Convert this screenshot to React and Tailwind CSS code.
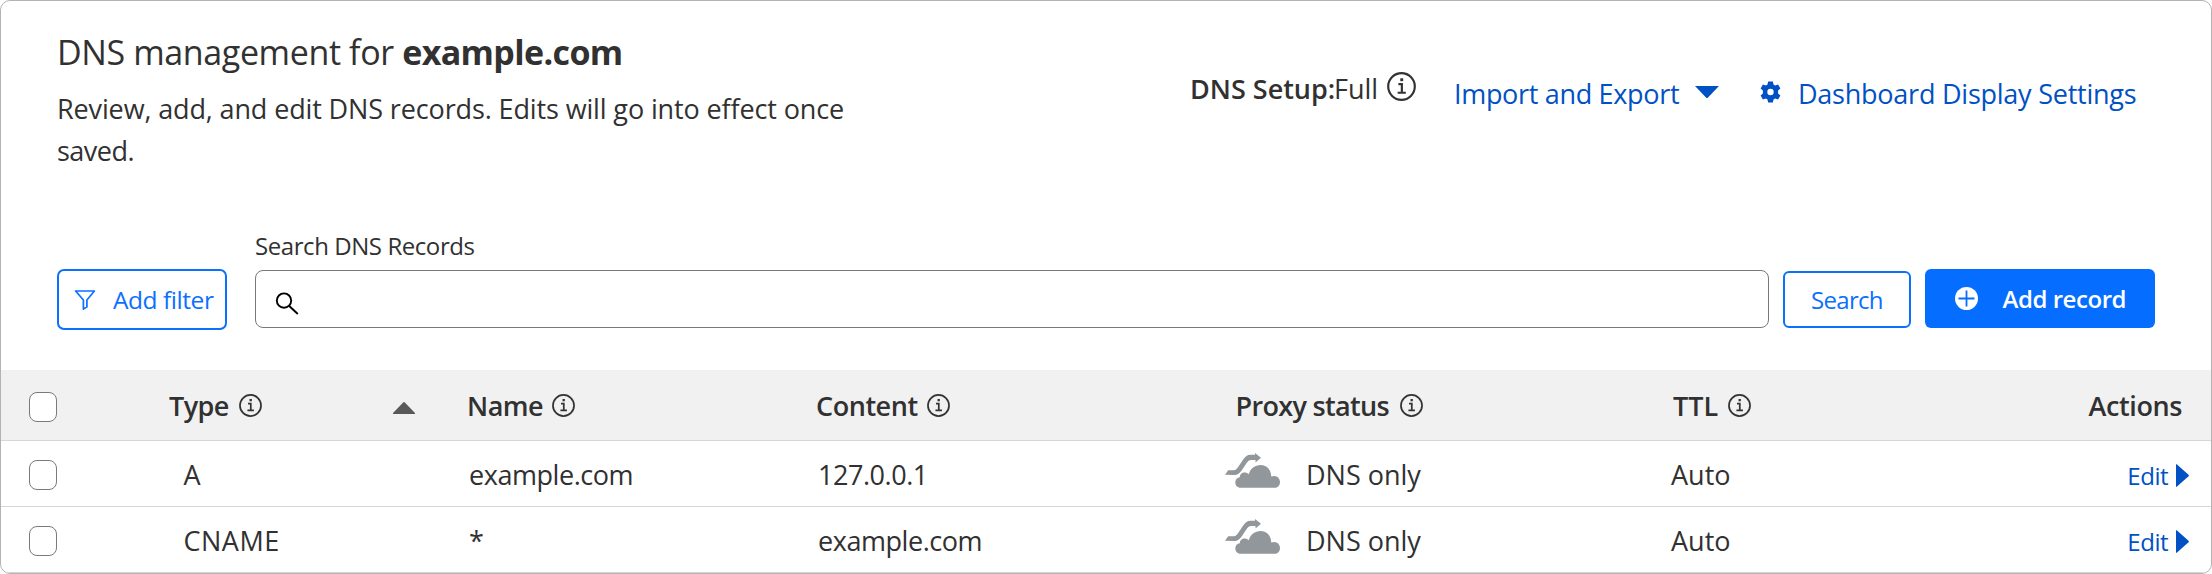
function InfoIcon({ className }) {
  return (
    <svg viewBox="0 0 24 24" className={className} fill="none" stroke="#333" strokeWidth="1.8">
      <circle cx="12" cy="12" r="11" />
      <path d="M9.4 10h2.9v7.2M8.8 17.2h6.8" />
      <rect x="11" y="5.2" width="2.4" height="2.4" fill="#333" stroke="none" />
    </svg>
  );
}

function FilterIcon() {
  return (
    <svg viewBox="0 0 22 20" className="h-5 w-[22px] shrink-0" fill="none" stroke="#0a70ff" strokeWidth="1.7">
      <path d="M1.6 1h18.8l-7.5 9v6.9l-3.5 2.2V10z" strokeLinejoin="round" />
    </svg>
  );
}

function SearchIcon() {
  return (
    <svg viewBox="0 0 24 23" className="mt-[4px] h-[23px] w-6" fill="none" stroke="#000" strokeWidth="1.9">
      <circle cx="9" cy="8.6" r="7.2" />
      <path d="M14 13.8l8.8 8.2" />
    </svg>
  );
}

function GearIcon() {
  return (
    <svg viewBox="0 0 20 22" className="h-[22px] w-[21px] shrink-0" fill="#0051c3">
      <path
        fillRule="evenodd"
        d="M7.6.6h4.8l.6 3 1.6.9 3-1.1 2.3 4.1-2.3 2.1v2.8l2.3 2.1-2.3 4.1-3-1.1-1.6.9-.6 3H7.6l-.6-3-1.6-.9-3 1.1L.1 14.5l2.3-2.1V9.6L.1 7.5l2.3-4.1 3 1.1 1.6-.9zM10 7.8a3.2 3.2 0 1 0 0 6.4a3.2 3.2 0 1 0 0-6.4z"
      />
    </svg>
  );
}

function PlusIcon() {
  return (
    <svg viewBox="0 0 23 23" className="h-[23px] w-[23px] shrink-0">
      <circle cx="11.5" cy="11.5" r="11.5" fill="#fff" />
      <path d="M11.5 3.500v16M3.500 11.500h16" stroke="#056dff" strokeWidth="1.8" />
    </svg>
  );
}

function BypassCloudIcon() {
  return (
    <svg viewBox="0 0 55 35" className="h-[35px] w-[55px] shrink-0" fill="#92979b">
      <path d="M0 21.7L3.2 17.300H8.500C11 17.300 12.300 15.500 14 12.800L17.500 7.500C20 3.600 22 1.800 25.500 1.800H30V0L36 4.700L30.500 9.600V7H26.500C24 7 23 8 21.300 10.500L17 17C14.500 20.600 12.500 22 9.500 22Z" />
      <path d="M15.600 34.800C12.500 34.600 10.300 32.500 10.300 29.500C10.300 26.500 12.300 24.500 14.800 24.300C14.600 21.500 17 19.400 19.500 19.400C21 19.400 22.600 20 23.800 21.200C25.400 15.500 30 12 35.500 12C42.500 12 46.300 17.500 46.200 23.600C51 21.400 55 24.800 55 29C55 32.600 52.500 34.800 49.500 34.800Z" />
    </svg>
  );
}

function Checkbox() {
  return (
    <span
      role="checkbox"
      aria-checked="false"
      className="mt-[3px] ml-7 block h-[30px] w-7 rounded-[8px] border border-[#7a7a7a] bg-white"
    />
  );
}

const cols = "grid grid-cols-[168px_298px_349px_406px_449px_1fr] items-center";

const rows = [
  { type: "A", name: "example.com", content: "127.0.0.1" },
  { type: "CNAME", name: "*", content: "example.com" },
];

export default function App() {
  return (
    <div className="flex h-[574px] w-[2212px] flex-col overflow-hidden rounded-[10px] border border-[#b3b3b3] bg-white font-['Open_Sans',sans-serif] text-[27px] leading-[42px] whitespace-nowrap text-[#313131]">
      <header className="flex h-[224px] items-start pt-[26px]">
        <div className="w-[1189px] pl-[56px]">
          <h1 className="text-[34px] leading-[50px] tracking-[-0.38px]">
            DNS management for <b className="font-bold tracking-[-0.62px]">example.com</b>
          </h1>
          <p className="mt-[11px] tracking-[-0.13px]">
            Review, add, and edit DNS records. Edits will go into effect once
            <br />
            <span className="tracking-[-0.5px]">saved.</span>
          </p>
        </div>
        <div className="mt-[41px] flex w-[264px] items-center">
          <span className="w-[144px] font-semibold">DNS Setup:</span>
          <span className="w-[52.5px]">Full</span>
          <InfoIcon className="-mt-[5px] h-[29px] w-[29px]" />
        </div>
        <div className="mt-[46px] flex w-[304px] items-center text-[#0051c3]">
          <span className="w-[241px] tracking-[-0.32px]">Import and Export</span>
          <svg viewBox="0 0 24 13" className="-mt-[4px] h-[13px] w-6" fill="#0051c3">
            <path d="M0 0h24L13 11.600q-1 1-2 0z" />
          </svg>
        </div>
        <div className="mt-[46px] flex items-center text-[#0051c3]">
          <span className="-mt-[5px] mr-[17px] ml-[2px] flex">
            <GearIcon />
          </span>
          <span className="tracking-[-0.24px]">Dashboard Display Settings</span>
        </div>
      </header>

      <section className="flex h-[145px] items-start pl-14 text-[24px] leading-[34px]">
        <button className="mt-11 flex h-[61px] w-[170px] items-center rounded-[7px] border-2 border-[#0a70ff] pl-[15px] text-[#0a70ff]">
          <FilterIcon />
          <span className="ml-[17px] text-[24.5px] tracking-[-0.45px]">Add filter</span>
        </button>
        <label className="ml-7 block w-[1514px]">
          <span className="mt-[3px] block h-[42px] leading-[36px] tracking-[-0.43px]">Search DNS Records</span>
          <span className="flex h-[58px] items-center rounded-[8px] border border-[#797979] pt-[4px] pl-[19px]">
            <SearchIcon />
          </span>
        </label>
        <button className="mt-[46px] ml-[14px] flex h-[57px] w-[128px] items-center justify-center rounded-[6px] border-2 border-[#0a70ff] tracking-[-0.7px] text-[#0a70ff]">
          Search
        </button>
        <button className="mt-11 ml-[14px] flex h-[59px] w-[230px] items-center rounded-[6px] bg-[#056dff] pl-[30px] font-semibold text-white">
          <PlusIcon />
          <span className="ml-[24.5px] tracking-[-0.45px]">Add record</span>
        </button>
      </section>

      <section className="flex-1">
        <div className={`${cols} h-[71px] border-b border-[#d6d6d6] bg-[#f1f1f1] font-semibold`}>
          <Checkbox />
          <div className="flex items-center">
            <span className="w-[70px] pt-px tracking-[-0.6px]">Type</span>
            <InfoIcon className="h-[23px] w-[23px]" />
            <svg viewBox="0 0 22 12" className="mt-[6px] ml-[130.5px] h-3 w-[22px]" fill="#595959">
              <path d="M0 12v-1L10.200.500q.8-.8 1.600 0L22 11v1z" />
            </svg>
          </div>
          <div className="flex items-center">
            <span className="w-[85px] pt-px tracking-[-0.5px]">Name</span>
            <InfoIcon className="h-[23px] w-[23px]" />
          </div>
          <div className="flex items-center">
            <span className="w-[111px] pt-px tracking-[-0.45px]">Content</span>
            <InfoIcon className="h-[23px] w-[23px]" />
          </div>
          <div className="flex items-center pl-[13.5px]">
            <span className="w-[164px] pt-px tracking-[-0.67px]">Proxy status</span>
            <InfoIcon className="h-[23px] w-[23px]" />
          </div>
          <div className="flex items-center justify-between pr-[29px]">
            <span className="flex items-center pl-[2px]">
              <span className="w-[54.5px] pt-px">TTL</span>
              <InfoIcon className="h-[23px] w-[23px]" />
            </span>
            <span className="pt-px tracking-[-0.4px]">Actions</span>
          </div>
        </div>

        {rows.map((row) => (
          <div key={row.type} className={`${cols} h-[66px] border-b border-[#d6d6d6]`}>
            <Checkbox />
            <div className="pt-[3px] pl-[14.5px] tracking-[0.5px]">{row.type}</div>
            <div className="pt-[3px] pl-[2px] tracking-[-0.45px]">{row.name}</div>
            <div className="pt-[3px] pl-[2px] tracking-[-0.45px]">{row.content}</div>
            <div className="flex items-center pl-[3px]">
              <span className="-mt-[7px] mr-[26px] flex">
                <BypassCloudIcon />
              </span>
              <span className="pt-[3px]">DNS only</span>
            </div>
            <div className="flex items-center justify-between pt-[3px] pr-[22px]">
              <span>Auto</span>
              <span className="flex items-center text-[24px] text-[#0051c3]">
                <span className="pt-px tracking-[-0.5px]">Edit</span>
                <svg viewBox="0 0 13 23" className="mt-px ml-[8px] h-[23px] w-[13px]" fill="#0051c3">
                  <path d="M0 .5Q0-.3 1 .5L12.500 10.800q.6.700 0 1.400L1 22.500q-1 .8-1 0z" />
                </svg>
              </span>
            </div>
          </div>
        ))}
      </section>
    </div>
  );
}
